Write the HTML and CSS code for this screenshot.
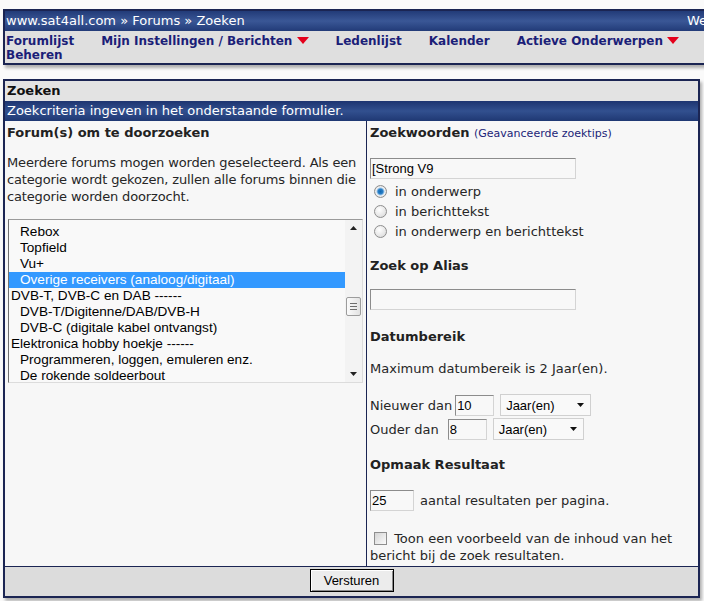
FILE: index.html
```html
<!DOCTYPE html>
<html>
<head>
<meta charset="utf-8">
<title>Zoeken</title>
<link rel="stylesheet" href="styles.css">
</head>
<body>
<div class="header">
  <div class="titlebar"><span class="crumbs">www.sat4all.com » Forums » Zoeken</span><span class="welcome">Welkom Gast</span></div>
  <div class="nav">
    <a class="navlink">Forumlijst</a>
    <a class="navlink">Mijn Instellingen / Berichten <svg class="tri" width="12" height="7" viewBox="0 0 12 7"><polygon points="0,0 12,0 6,7" fill="#e4001b"/></svg></a>
    <a class="navlink">Ledenlijst</a>
    <a class="navlink">Kalender</a>
    <a class="navlink">Actieve Onderwerpen <svg class="tri" width="12" height="7" viewBox="0 0 12 7"><polygon points="0,0 12,0 6,7" fill="#e4001b"/></svg></a>
    <a class="navlink">Beheren</a>
  </div>
</div>

<div class="panel">
  <div class="phead">Zoeken</div>
  <div class="pbar">Zoekcriteria ingeven in het onderstaande formulier.</div>
  <div class="cols">
    <div class="left">
      <div class="h">Forum(s) om te doorzoeken</div>
      <p class="para">Meerdere forums mogen worden geselecteerd. Als een categorie wordt gekozen, zullen alle forums binnen die categorie worden doorzocht.</p>
      <div class="listbox">
        <div class="options">
          <div class="opt-row sub">Rebox</div>
          <div class="opt-row sub">Topfield</div>
          <div class="opt-row sub">Vu+</div>
          <div class="opt-row sub selected">Overige receivers (analoog/digitaal)</div>
          <div class="opt-row">DVB-T, DVB-C en DAB ------</div>
          <div class="opt-row sub">DVB-T/Digitenne/DAB/DVB-H</div>
          <div class="opt-row sub">DVB-C (digitale kabel ontvangst)</div>
          <div class="opt-row">Elektronica hobby hoekje ------</div>
          <div class="opt-row sub">Programmeren, loggen, emuleren enz.</div>
          <div class="opt-row sub">De rokende soldeerbout</div>
        </div>
        <div class="sbar">
          <div class="sb-btn"><svg width="7" height="4" viewBox="0 0 7 4"><polygon points="0,4 7,4 3.5,0" fill="#222"/></svg></div>
          <div class="sb-track">
            <div class="thumb"><span class="grip"></span><span class="grip"></span><span class="grip"></span></div>
          </div>
          <div class="sb-btn"><svg width="7" height="4" viewBox="0 0 7 4"><polygon points="0,0 7,0 3.5,4" fill="#222"/></svg></div>
        </div>
      </div>
    </div>
    <div class="right">
      <div class="h">Zoekwoorden <span class="tips">(Geavanceerde zoektips)</span></div>
      <input class="txt long kw" type="text" value="[Strong V9">
      <div class="radios">
        <label class="opt"><input type="radio" name="w" checked> in onderwerp</label>
        <label class="opt"><input type="radio" name="w"> in berichttekst</label>
        <label class="opt"><input type="radio" name="w"> in onderwerp en berichttekst</label>
      </div>
      <div class="h sec">Zoek op Alias</div>
      <input class="txt long alias" type="text" value="">
      <div class="h sec2">Datumbereik</div>
      <p class="max">Maximum datumbereik is 2 Jaar(en).</p>
      <div class="daterow first">Nieuwer dan<input class="txt num n1" type="text" value="10"><span class="sel">Jaar(en)<svg width="7" height="4" viewBox="0 0 7 4"><polygon points="0,0 7,0 3.5,4" fill="#111"/></svg></span></div>
      <div class="daterow">Ouder dan<input class="txt num n2" type="text" value="8"><span class="sel">Jaar(en)<svg width="7" height="4" viewBox="0 0 7 4"><polygon points="0,0 7,0 3.5,4" fill="#111"/></svg></span></div>
      <div class="h sec">Opmaak Resultaat</div>
      <div class="perpage"><input class="txt pp" type="text" value="25"><span>aantal resultaten per pagina.</span></div>
      <p class="preview"><input type="checkbox"> Toon een voorbeeld van de inhoud van het bericht bij de zoek resultaten.</p>
    </div>
  </div>
  <div class="pfoot"><button class="btn" type="button">Versturen</button></div>
</div>
</body>
</html>
```

FILE: styles.css
```css
* { box-sizing: border-box; }
html, body { margin: 0; padding: 0; }
body {
  background: #fafafa;
  font-family: "DejaVu Sans", Verdana, sans-serif;
  font-size: 13px;
  color: #262626;
  width: 704px;
  height: 601px;
  overflow: hidden;
}

/* header */
.header {
  margin: 9px 0 0 3px;
  width: 740px;
  border: 2px solid #1b2553;
  box-shadow: 2px 3px 3px rgba(0,0,0,0.3);
}
.titlebar {
  display: flex;
  height: 20px;
  line-height: 20px;
  padding: 0 1px;
  color: #fff;
  white-space: nowrap;
  overflow: hidden;
  background: linear-gradient(#223b78, #3a5796 50%, #223b78);
}
.crumbs { flex: none; width: 681px; }
.nav {
  display: flex;
  flex-wrap: wrap;
  column-gap: 27px;
  padding: 3px 1px 1px;
  background: #dfdfdf;
  font-size: 12px;
  font-weight: bold;
  line-height: 14px;
}
.navlink { color: #1b1e78; white-space: nowrap; }
.tri { vertical-align: 1px; }

/* panel */
.panel {
  margin: 14px 0 0 3px;
  width: 697px;
  border: 2px solid #1b2553;
  box-shadow: 2px 3px 3px rgba(0,0,0,0.3);
  background: #f7f7f7;
}
.phead {
  height: 20px;
  line-height: 20px;
  padding: 0 2px;
  background: #e3e3e3;
  color: #111;
  font-weight: bold;
}
.pbar {
  height: 20px;
  line-height: 20px;
  padding: 0 2px;
  color: #fff;
  background: linear-gradient(#1d3470, #32508f 50%, #1f3873);
}
.cols { display: flex; }
.left {
  width: 362px;
  flex: none;
  border-right: 1px solid #1b2553;
  padding: 3px 0 0 2px;
}
.right {
  flex: 1;
  padding: 3px 4px 2px 3px;
}
.h { font-weight: bold; line-height: 17px; color: #222; }
.tips { font-weight: normal; font-size: 11px; color: #1b1e78; }
.para { margin: 13px 0 0; line-height: 17px; color: #262626; letter-spacing: -0.16px; }

/* listbox */
.listbox {
  margin: 14px 0 0 1px;
  width: 355px;
  height: 164px;
  display: flex;
  border: 1px solid;
  border-color: #9a9a9a #dcdcdc #dcdcdc #6f6f6f;
  background: #f9f9f9;
  overflow: hidden;
  font-family: "Liberation Sans", Arial, sans-serif;
  font-size: 13.6px;
  color: #000;
}
.options { flex: 1; padding-top: 4px; overflow: hidden; }
.opt-row { height: 16px; line-height: 16px; padding-left: 2px; white-space: nowrap; }
.opt-row.sub { padding-left: 11px; }
.opt-row.selected { background: #3399ff; color: #fff; }
.sbar {
  width: 17px;
  flex: none;
  display: flex;
  flex-direction: column;
  background: #f3f3f3;
}
.sb-btn { height: 16px; display: flex; align-items: center; justify-content: center; }
.sb-track { flex: 1; padding: 61px 0 0 1px; }
.thumb {
  width: 15px;
  height: 19px;
  border: 1px solid #9c9c9c;
  border-radius: 2px;
  background: linear-gradient(90deg, #fbfbfb, #e2e2e2);
  display: flex;
  flex-direction: column;
  align-items: center;
  justify-content: center;
  gap: 2px;
}
.grip { width: 7px; height: 1px; background: #6d6d6d; }

/* right column */
.txt {
  display: block;
  height: 21px;
  margin: 0;
  padding: 0 1px;
  border: 1px solid;
  border-color: #8c8c8c #d4d4d4 #d4d4d4 #8c8c8c;
  background: #f8f8f8;
  font-family: "Liberation Sans", Arial, sans-serif;
  font-size: 13px;
  color: #000;
  outline: none;
}
.long { width: 206px; }
.kw { margin-top: 16px; }
.radios { margin-top: 2px; }
.opt { display: flex; align-items: center; height: 20px; }
input[type=radio] {
  appearance: none;
  -webkit-appearance: none;
  width: 13px;
  height: 13px;
  margin: 0 8px 0 4px;
  border: 1px solid #8e8e8e;
  border-radius: 50%;
  background: radial-gradient(circle at 40% 35%, #ffffff, #d6d6d6);
}
input[type=radio]:checked {
  background: radial-gradient(circle, #1167b0 0, #2a80c8 2.5px, #9cc4e6 3.5px, #f4f4f4 4.5px, #d6d6d6 6px);
}
.sec { margin-top: 16px; }
.alias { margin-top: 15px; }
.sec2 { margin-top: 18px; }
.max { margin: 15px 0 0; line-height: 17px; }
.daterow { display: flex; align-items: center; height: 22px; margin-top: 2px; white-space: nowrap; }
.daterow.first { margin-top: 17px; }
.num { width: 39px; }
.n1 { margin-left: 3px; }
.n2 { margin-left: 9px; }
.sel {
  display: inline-flex;
  align-items: center;
  justify-content: space-between;
  width: 91px;
  height: 22px;
  margin-left: 6px;
  padding: 0 6px 0 5px;
  border: 1px solid #d0d0d0;
  background: #f9f9f9;
  font-family: "Liberation Sans", Arial, sans-serif;
  font-size: 13px;
  color: #000;
}
.perpage { display: flex; align-items: center; margin-top: 17px; }
.pp { width: 44px; margin-right: 6px; }
.preview { margin: 19px 0 0; line-height: 17px; }
input[type=checkbox] {
  appearance: none;
  -webkit-appearance: none;
  width: 13px;
  height: 13px;
  margin: 0 3px 0 4px;
  vertical-align: -2px;
  border: 1px solid #8e8e8e;
  background: linear-gradient(135deg, #d4d4d4, #fbfbfb);
}

/* footer */
.pfoot {
  border-top: 1px solid #1b2553;
  background: #dcdcdc;
  height: 30px;
  display: flex;
  justify-content: center;
  padding-top: 2px;
}
.btn {
  width: 84px;
  height: 23px;
  margin: 0;
  padding: 0;
  border: 1px solid #000;
  background: #ececec;
  box-shadow: inset 1px 1px 0 #fff, inset -1px -1px 0 #8a8a8a;
  font-family: "Liberation Sans", Arial, sans-serif;
  font-size: 13px;
  color: #000;
}
```
